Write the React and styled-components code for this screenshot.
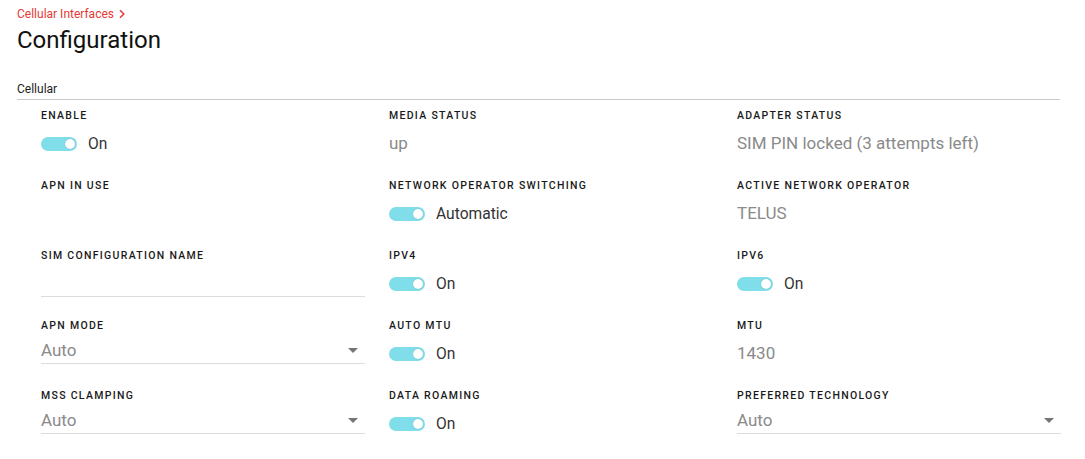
import styled, { createGlobalStyle } from "styled-components";

const GlobalStyle = createGlobalStyle`
  body {
    margin: 0;
    background: #fff;
    font-family: Roboto, "Noto Sans", sans-serif;
  }
`;

const fields = [
  { label: "Enable", type: "toggle", value: "On" },
  { label: "Media Status", type: "text", value: "up" },
  { label: "Adapter Status", type: "text", value: "SIM PIN locked (3 attempts left)" },
  { label: "APN in use", type: "text", value: "" },
  { label: "Network Operator Switching", type: "toggle", value: "Automatic" },
  { label: "Active Network Operator", type: "text", value: "TELUS" },
  { label: "SIM Configuration Name", type: "input", value: "" },
  { label: "IPv4", type: "toggle", value: "On" },
  { label: "IPv6", type: "toggle", value: "On" },
  { label: "APN Mode", type: "select", value: "Auto" },
  { label: "Auto MTU", type: "toggle", value: "On" },
  { label: "MTU", type: "text", value: "1430" },
  { label: "MSS Clamping", type: "select", value: "Auto" },
  { label: "Data Roaming", type: "toggle", value: "On" },
  { label: "Preferred Technology", type: "select", value: "Auto" },
];

function Field({ field }) {
  let control = null;
  if (field.type === "toggle") {
    control = (
      <ToggleRow>
        <Track>
          <Thumb />
        </Track>
        <ToggleText>{field.value}</ToggleText>
      </ToggleRow>
    );
  } else if (field.type === "select") {
    control = (
      <SelectBox>
        <Value>{field.value}</Value>
        <Arrow />
      </SelectBox>
    );
  } else if (field.type === "input") {
    control = <InputLine />;
  } else {
    control = <StaticValue>{field.value}</StaticValue>;
  }
  return (
    <Cell>
      <Label>{field.label}</Label>
      {control}
    </Cell>
  );
}

function App() {
  return (
    <Page>
      <GlobalStyle />
      <Crumb>
        Cellular Interfaces
        <svg width="10" height="10" viewBox="0 0 10 10">
          <path d="M3 1.2 L6.8 5 L3 8.8" fill="none" stroke="#e53935" strokeWidth="1.5" />
        </svg>
      </Crumb>
      <Title>Configuration</Title>
      <Section>Cellular</Section>
      <Grid>
        {fields.map((f) => (
          <Field key={f.label} field={f} />
        ))}
      </Grid>
    </Page>
  );
}

export default App;

const Page = styled.div`
  padding: 6px 25px 0 17px;
`;

const Crumb = styled.div`
  display: flex;
  align-items: center;
  gap: 3px;
  font-size: 12px;
  color: #e53935;
  height: 16px;
`;

const Title = styled.h1`
  margin: 3px 0 0;
  font-size: 24px;
  font-weight: 400;
  color: #111;
  line-height: 30px;
`;

const Section = styled.div`
  margin-top: 27px;
  font-size: 12px;
  color: #222;
  padding-bottom: 3px;
  border-bottom: 1px solid #c8c8c8;
`;

const Grid = styled.div`
  display: grid;
  grid-template-columns: repeat(3, 324px);
  column-gap: 24px;
  padding: 9px 0 0 24px;
`;

const Cell = styled.div`
  height: 70px;
  display: flex;
  flex-direction: column;
`;

const Label = styled.div`
  font-size: 10.5px;
  font-weight: 500;
  letter-spacing: 1.3px;
  text-transform: uppercase;
  color: #1a1a1a;
  line-height: 14px;
`;

const Value = styled.div`
  font-size: 17px;
  color: #8a8a8a;
  line-height: 22px;
`;

const StaticValue = styled(Value)`
  margin-top: 9px;
`;

const ToggleRow = styled.div`
  display: flex;
  align-items: center;
  gap: 11px;
  margin-top: 10px;
  height: 22px;
`;

const Track = styled.div`
  position: relative;
  width: 36px;
  height: 14px;
  border-radius: 7px;
  background: #80deea;
`;

const Thumb = styled.div`
  position: absolute;
  right: 2px;
  top: 2px;
  width: 10px;
  height: 10px;
  border-radius: 50%;
  background: #fff;
  box-shadow: 0 0 1px rgba(0, 0, 0, 0.3);
`;

const ToggleText = styled.span`
  font-size: 15.6px;
  color: #333;
`;

const SelectBox = styled.div`
  display: flex;
  align-items: center;
  justify-content: space-between;
  padding: 6px 0 2px;
  border-bottom: 1px solid #dcdcdc;
`;

const InputLine = styled.div`
  height: 33px;
  border-bottom: 1px solid #dcdcdc;
`;

const Arrow = styled.div`
  width: 0;
  height: 0;
  margin-right: 7px;
  border-left: 5px solid transparent;
  border-right: 5px solid transparent;
  border-top: 5px solid #757575;
`;
